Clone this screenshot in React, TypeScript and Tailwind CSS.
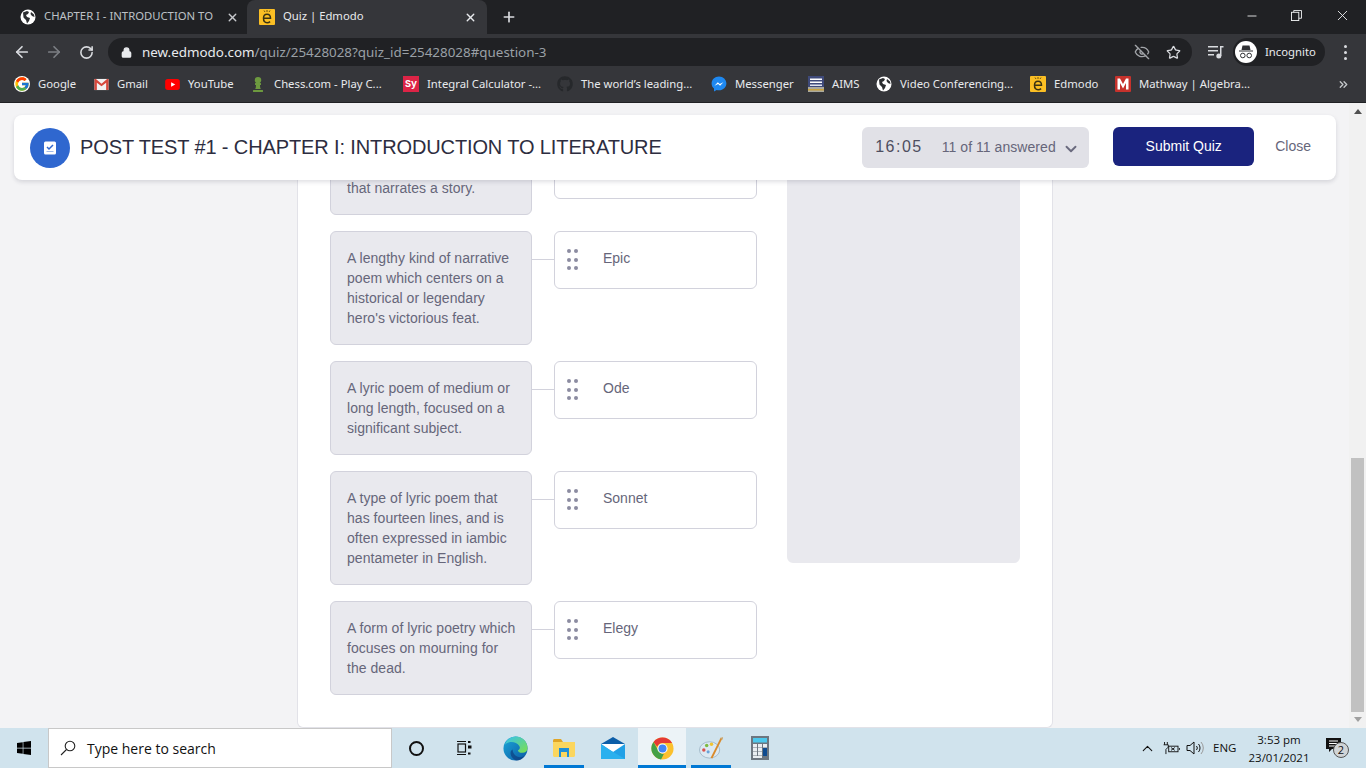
import React from 'react';
import { ArrowLeft, ArrowRight, RotateCw, Lock, X, Plus, Minus, Star, ChevronDown, ChevronUp, ChevronsRight, EyeOff } from 'lucide-react';
import { FaChessPawn, FaGithub, FaWindows } from 'react-icons/fa';
import { FcGoogle } from 'react-icons/fc';

const Globe = ({ className = 'w-4 h-4' }: { className?: string }) => (
    <svg viewBox="0 0 16 16" className={className}>
        <circle cx="8" cy="8" r="7.5" fill="#fff" />
        <path d="M3 3.5 L7 2 L9 3 L8 5 L6 6 L7 8 L10 9 L9 12 L7 14.5 L6 11 L3.5 8.5 Z M11 3 L14 5.5 L14.5 8 L12 7 L10.5 5 Z" fill="#2b2d30" />
    </svg>
);

const EdmodoLogo = ({ className = 'w-4 h-4' }: { className?: string }) => (
    <svg viewBox="0 0 16 16" className={className}>
        <rect width="16" height="16" rx="1" fill="#fbbf24" />
        <path d="M5 1.5l1 1.5M8 1v2M11 1.5l-1 1.5" stroke="#4a3b10" strokeWidth="0.8" />
        <path d="M4.5 9.3h7c0-2.7-1.5-4-3.5-4s-3.5 1.5-3.5 4 1.5 4.4 3.6 4.4c1.2 0 2.2-.4 3-1.1" fill="none" stroke="#3a3213" strokeWidth="1.5" />
    </svg>
);

const GmailIcon = () => (
    <svg viewBox="0 0 16 14" className="w-[15px] h-[13px]">
        <rect x="0.5" y="1" width="15" height="12" fill="#f2f2f2" />
        <path d="M0.5 1v12h2.5V5l5 4 5-4v8h2.5V1h-1.5L8 6.2 2 1z" fill="#d6483c" />
    </svg>
);

const YouTubeIcon = () => (
    <svg viewBox="0 0 16 12" className="w-[15px] h-[11px]">
        <rect width="16" height="12" rx="3" fill="#f00" />
        <path d="M6.5 3.5L11 6l-4.5 2.5z" fill="#fff" />
    </svg>
);

const SyIcon = () => (
    <div className="w-4 h-4 bg-[#dc2446] flex items-center justify-center text-white text-[10px] font-bold font-['Liberation_Mono',monospace]">Sy</div>
);

const MessengerIcon = () => (
    <svg viewBox="0 0 16 16" className="w-4 h-4">
        <path d="M8 .5C3.8.5.6 3.6.6 7.5c0 2.1.9 3.9 2.4 5.1v2.9l2.7-1.5c.7.2 1.500.3 2.300.3 4.200 0 7.400-3.100 7.400-6.800S12.200.5 8 .5z" fill="#1e88f0" />
        <path d="M3.500 9.800L6.800 6.300l2 1.800 3.600-1.900-3.300 3.600-2-1.900z" fill="#fff" />
    </svg>
);

const AimsIcon = () => (
    <svg viewBox="0 0 16 16" className="w-4 h-4">
        <rect width="16" height="16" fill="#3f4a7a" />
        <rect y="11" width="16" height="5" fill="#a9a9a0" />
        <rect y="13" width="16" height="1.500" fill="#c9a13b" />
        <rect x="2" y="2.500" width="12" height="1.500" fill="#fff" />
        <rect x="2" y="5.500" width="12" height="1.500" fill="#fff" />
        <rect x="2" y="8.500" width="12" height="1.500" fill="#dfe3f0" />
    </svg>
);

const MathwayIcon = () => (
    <svg viewBox="0 0 16 16" className="w-4 h-4">
        <rect width="16" height="16" rx="1" fill="#c6322c" />
        <path d="M2.500 13.500V2.500H5L8 8l3-5.500h2.500v11H11V7L8 12.500 5 7v6.500z" fill="#fff" />
    </svg>
);

const bookmarks = [
    { label: 'Google', width: 'w-[79px]', icon: <FcGoogle className="w-4 h-4 bg-white rounded-full" /> },
    { label: 'Gmail', width: 'w-[71px]', icon: <GmailIcon /> },
    { label: 'YouTube', width: 'w-[86px]', icon: <YouTubeIcon /> },
    { label: 'Chess.com - Play C...', width: 'w-[153px]', icon: <FaChessPawn className="w-4 h-4 text-[#6d9a3f]" /> },
    { label: 'Integral Calculator -...', width: 'w-[154px]', icon: <SyIcon /> },
    { label: 'The world\u2019s leading...', width: 'w-[154px]', icon: <FaGithub className="w-4 h-4 text-[#26282b]" /> },
    { label: 'Messenger', width: 'w-[97px]', icon: <MessengerIcon /> },
    { label: 'AIMS', width: 'w-[68px]', icon: <AimsIcon /> },
    { label: 'Video Conferencing...', width: 'w-[154px]', icon: <Globe /> },
    { label: 'Edmodo', width: 'w-[85px]', icon: <EdmodoLogo /> },
    { label: 'Mathway | Algebra...', width: 'w-[222px]', icon: <MathwayIcon /> },
];

const ChromeBar = () => (
    <div className="shrink-0 font-['Noto_Sans',sans-serif] text-white">
        {/* tab strip */}
        <div className="h-[34px] bg-[#202124] flex items-end relative">
            <div className="w-[239px] ml-2 h-[34px] flex items-center pl-3 pr-[8px]">
                <Globe className="w-4 h-4 shrink-0" />
                <span className="ml-2 mb-px flex-1 text-[11.3px] text-[#bdc1c6] whitespace-nowrap">CHAPTER I - INTRODUCTION TO</span>
                <X size={13} strokeWidth={2.500} className="ml-1 text-[#c8cacd]" />
            </div>
            <div className="w-[240px] h-[34px] bg-[#35363a] rounded-t-lg flex items-center pl-3 pr-[10px]">
                <EdmodoLogo className="w-4 h-4 shrink-0" />
                <span className="ml-2 mb-px flex-1 text-[11.3px] text-[#e8eaed]">Quiz | Edmodo</span>
                <X size={13} strokeWidth={2.500} className="text-[#e8eaed]" />
            </div>
            <Plus size={16} strokeWidth={2.500} className="ml-[14px] mb-[9px] text-[#dadce0]" />
            <div className="ml-auto flex items-center h-[34px] text-[#f1f3f4]">
                <Minus size={14} strokeWidth={1.500} className="mr-[32px] mb-[3px]" />
                <svg viewBox="0 0 12 12" className="w-[11px] h-[11px] mr-[32px] mb-[3px]" fill="none" stroke="currentColor">
                    <rect x="0.500" y="2.500" width="8" height="9" />
                    <path d="M3 2.500V0.500h8.500v8.500H8.500" />
                </svg>
                <X size={17} strokeWidth={1.250} className="mr-[15px] mb-[3px]" />
            </div>
        </div>
        {/* toolbar */}
        <div className="h-[33px] bg-[#35363a] flex items-center pl-[13px] pt-[3px]">
            <ArrowLeft size={18} strokeWidth={2.250} className="text-[#dadce0]" />
            <ArrowRight size={18} strokeWidth={2.250} className="ml-[14px] text-[#7c7f84]" />
            <RotateCw size={15} strokeWidth={2.500} className="ml-[16px] text-[#dadce0]" />
            <div className="ml-[14px] w-[1084px] h-[28px] bg-[#202124] rounded-full flex items-center pl-[13px] pr-[10px] text-[13.400px]">
                <Lock size={11} strokeWidth={3} fill="currentColor" className="text-[#e8eaed]" />
                <span className="ml-[10px] text-[#e8eaed]">new.edmodo.com<span className="text-[#9aa0a6]">/quiz/25428028?quiz_id=25428028#question-3</span></span>
                <EyeOff size={16} strokeWidth={2} className="ml-auto text-[#a2a5a9]" />
                <Star size={15} strokeWidth={2} className="ml-[16px] mr-[1px] text-[#dadce0]" />
            </div>
            <svg viewBox="0 0 16 14" className="ml-[16px] w-4 h-[14px] text-[#dadce0]" fill="currentColor">
                <rect x="0" y="1" width="10" height="1.500" />
                <rect x="0" y="5" width="10" height="1.500" />
                <rect x="0" y="9" width="6" height="1.500" />
                <rect x="12" y="1" width="3.500" height="1.500" />
                <rect x="12" y="1" width="1.500" height="10" />
                <circle cx="10.800" cy="11" r="2.500" />
            </svg>
            <div className="ml-[9px] w-[92px] h-[28px] bg-[#202124] rounded-full flex items-center pl-[2px]">
                <svg viewBox="0 0 22 22" className="w-[22px] h-[22px]">
                    <circle cx="11" cy="11" r="11" fill="#fff" />
                    <path d="M7.500 4.500h7l1 4.500H6.500z M4 9.500h14v1H4z" fill="#303134" />
                    <circle cx="7.800" cy="14.500" r="2.300" fill="none" stroke="#303134" strokeWidth="1" />
                    <circle cx="14.200" cy="14.500" r="2.300" fill="none" stroke="#303134" strokeWidth="1" />
                </svg>
                <span className="ml-2 text-[11.3px] text-[#e8eaed]">Incognito</span>
            </div>
            <div className="ml-[19px] flex flex-col gap-[3px]">
                <span className="w-[3px] h-[3px] bg-[#dadce0] rounded-full" />
                <span className="w-[3px] h-[3px] bg-[#dadce0] rounded-full" />
                <span className="w-[3px] h-[3px] bg-[#dadce0] rounded-full" />
            </div>
        </div>
        {/* bookmarks */}
        <div className="h-[36px] bg-[#35363a] border-b border-[#202124] flex items-center pl-[14px] pb-px">
            {bookmarks.map((b) => (
                <div key={b.label} className={`${b.width} shrink-0 flex items-center`}>
                    <span className="w-4 h-4 flex items-center justify-center shrink-0">{b.icon}</span>
                    <span className="ml-2 text-[11.3px] text-[#e8eaed] whitespace-nowrap">{b.label}</span>
                </div>
            ))}
            <ChevronsRight size={13} strokeWidth={2.500} className="text-[#c4c7ca]" />
        </div>
    </div>
);

const DragDots = () => (
    <div className="grid grid-cols-2 gap-x-[3px] gap-y-[4.500px] w-[11px] mt-[1px] shrink-0">
        {[0, 1, 2, 3, 4, 5].map((i) => (
            <span key={i} className="w-1 h-1 rounded-full bg-[#8c8ca1]" />
        ))}
    </div>
);

const rows = [
    { q: 'A poem of a certain length that narrates a story.', a: 'Narrative' },
    { q: "A lengthy kind of narrative poem which centers on a historical or legendary hero's victorious feat.", a: 'Epic' },
    { q: 'A lyric poem of medium or long length, focused on a significant subject.', a: 'Ode' },
    { q: 'A type of lyric poem that has fourteen lines, and is often expressed in iambic pentameter in English.', a: 'Sonnet' },
    { q: 'A form of lyric poetry which focuses on mourning for the dead.', a: 'Elegy' },
];

const MatchRow = ({ q, a }: { q: string; a: string }) => (
    <div className="flex items-start">
        <div className="w-[202px] shrink-0 bg-[#e9e9ee] border border-[#d2d2dc] rounded-md py-4 pl-4 pr-[13px] text-sm leading-5 tracking-[0.04px] text-[#66667a]">{q}</div>
        <div className="w-[22px] h-px mt-[28px] bg-[#d2d2dc] shrink-0" />
        <div className="w-[203px] h-[58px] shrink-0 bg-white border border-[#d2d2dc] rounded-md pl-3 pt-4 flex items-start">
            <DragDots />
            <span className="ml-[25px] text-sm leading-5 text-[#66667a]">{a}</span>
        </div>
    </div>
);

const QuizHeader = () => (
    <div className="absolute left-[14px] top-[12px] w-[1322px] h-[65px] bg-white rounded-lg shadow-[0_2px_4px_rgba(40,40,70,0.15)] flex items-center pl-4 pr-[25px]">
        <div className="w-10 h-10 rounded-full bg-[#2f67cf] flex items-center justify-center">
            <svg viewBox="0 0 14 14" className="w-[14px] h-[14px]">
                <rect x="1" y="0.500" width="12" height="13" rx="1.500" fill="#fff" />
                <path d="M4 6l2 2 4-4" fill="none" stroke="#2f67cf" strokeWidth="1.500" />
                <rect x="3.500" y="10" width="7" height="1" fill="#9db8e8" />
            </svg>
        </div>
        <h1 className="ml-[10px] mb-[2px] text-[20px] tracking-[-0.12px] text-[#2d2d40] whitespace-nowrap">POST TEST #1 - CHAPTER I: INTRODUCTION TO LITERATURE</h1>
        <div className="ml-auto w-[227px] h-[41px] mb-[1px] bg-[#e1e1e7] rounded-md flex items-center pl-[13px] text-[#66667a]">
            <span className="text-base tracking-[1.500px] text-[#4e4e60]">16:05</span>
            <span className="ml-[19px] text-sm tracking-[0.05px] whitespace-nowrap">11 of 11 answered</span>
            <ChevronDown size={18} strokeWidth={2.500} className="ml-[6px] mt-[4px] text-[#6a6a7e]" />
        </div>
        <button className="ml-6 w-[141px] h-[39px] mb-[3px] bg-[#1a237e] rounded-md text-sm text-white">Submit Quiz</button>
        <span className="ml-[21px] mb-[3px] text-sm text-[#66667a]">Close</span>
    </div>
);

const Scrollbar = () => (
    <div className="w-[17px] shrink-0 bg-[#f1f1f1] flex flex-col items-center relative">
        <svg viewBox="0 0 8 5" className="w-2 h-[5px] mt-[6px] text-[#505050]" fill="currentColor"><path d="M4 0l4 5H0z" /></svg>
        <div className="w-[13px] h-[254px] mt-[344px] bg-[#c1c1c1]" />
        <svg viewBox="0 0 8 5" className="w-2 h-[5px] mt-[5px] text-[#a0a0a0]" fill="currentColor"><path d="M4 5l4-5H0z" /></svg>
    </div>
);

const EdgeIcon = () => (
    <svg viewBox="0 0 26 26" className="w-[25px] h-[25px]">
        <defs>
            <linearGradient id="edgeA" x1="0" y1="0" x2="1" y2="1">
                <stop offset="0" stopColor="#1ba7d8" />
                <stop offset="1" stopColor="#0c59a4" />
            </linearGradient>
            <linearGradient id="edgeB" x1="0" y1="0" x2="1" y2="1">
                <stop offset="0" stopColor="#35c1f1" />
                <stop offset="1" stopColor="#7de04a" />
            </linearGradient>
        </defs>
        <circle cx="13" cy="13" r="12.500" fill="url(#edgeA)" />
        <path d="M2 9C4 3 9 .5 13 .5c7 0 12.500 5 12.500 12 0 3-2 5-5.500 5-3 0-4.500-1.500-4.500-2.500 2-1 2.500-2.500 1.500-4.500C15 7 10 5.500 6.500 6.500 4.500 7 3 8 2 9z" fill="url(#edgeB)" />
        <path d="M10 14c0 4 3 8 8 8 2 0 4-1 5-2-2 3.500-5.500 5.500-9 5.500-3.500-1-7-5-6-9 .2-1 1-2 2-2.500z" fill="#0e3f80" opacity="0.7" />
    </svg>
);

const ExplorerIcon = () => (
    <svg viewBox="0 0 22 18" className="w-[22px] h-[18px]">
        <path d="M0 1.500C0 .7.700 0 1.500 0H8l2 3H0z" fill="#e0a526" />
        <path d="M0 3h22v13.500c0 .8-.7 1.500-1.500 1.500h-19C.7 18 0 17.300 0 16.500z" fill="#fbd65e" />
        <rect x="6" y="9" width="10" height="9" fill="#1f8fd6" />
        <rect x="8" y="13" width="6" height="5" fill="#fbd65e" />
    </svg>
);

const MailIcon = () => (
    <svg viewBox="0 0 24 22" className="w-6 h-[22px]">
        <path d="M0 7L12 0l12 7v2H0z" fill="#0c5ea8" />
        <rect y="7" width="24" height="15" fill="#21a0e6" />
        <path d="M0 7l12 8 12-8z" fill="#fff" />
        <path d="M0 7v15h24L8 12.500z" fill="#2ab0ee" />
    </svg>
);

const ChromeIcon = () => (
    <svg viewBox="0 0 24 24" className="w-[23px] h-[23px]">
        <circle cx="12" cy="12" r="11.500" fill="#fbc02d" />
        <path d="M12 .5a11.500 11.500 0 0 1 10 5.750H12a5.750 5.750 0 0 0-5.500 4L2.600 5.200A11.500 11.500 0 0 1 12 .5z" fill="#e53935" />
        <path d="M2.600 5.200l5 8.800A5.750 5.750 0 0 0 13.500 17.600L10.500 23.400A11.500 11.500 0 0 1 2.600 5.200z" fill="#43a047" />
        <circle cx="12" cy="12" r="5.300" fill="#fff" />
        <circle cx="12" cy="12" r="4.200" fill="#4285f4" />
    </svg>
);

const PaintIcon = () => (
    <svg viewBox="0 0 26 24" className="w-[25px] h-[24px]">
        <ellipse cx="11" cy="14" rx="10.500" ry="8.500" fill="#dce9f2" stroke="#8fa8bb" strokeWidth="0.700" />
        <circle cx="5" cy="14" r="1.800" fill="#d9534f" />
        <circle cx="8" cy="9.500" r="1.800" fill="#7dbb42" />
        <circle cx="13" cy="8" r="1.800" fill="#f0c330" />
        <circle cx="9.500" cy="16" r="1.600" fill="#6aa3d8" />
        <path d="M23.500 1.500L13 22.500" stroke="#d98a2b" strokeWidth="2" />
        <path d="M21.500 2l3 1.500 .5-3z" fill="#c9a36a" />
    </svg>
);

const CalculatorIcon = () => (
    <svg viewBox="0 0 18 24" className="w-[18px] h-[24px]">
        <rect width="18" height="24" fill="#6c7680" />
        <rect x="2" y="2" width="14" height="4.500" fill="#4dc8ec" />
        {[8, 12, 16].map((y) =>
            [2, 7].map((x) => <rect key={`${x}-${y}`} x={x} y={y} width="4" height="3.500" fill="#e9eef2" />),
        )}
        <rect x="12" y="8" width="4" height="3.500" fill="#e9eef2" />
        <rect x="12" y="12" width="4" height="8" fill="#0d4a8f" />
        <rect x="2" y="20" width="9" height="2" fill="#e9eef2" />
    </svg>
);

const TaskButton = ({ children, active, running }: { children: React.ReactNode; active?: boolean; running?: boolean }) => (
    <div className={`w-[48px] h-10 flex items-center justify-center relative ${active ? 'bg-[#ecf3f7]' : ''}`}>
        {children}
        {running && <div className={`absolute bottom-0 h-[3px] bg-[#0078d4] ${active ? 'inset-x-0' : 'inset-x-1'}`} />}
    </div>
);

const Taskbar = () => (
    <div className="h-10 shrink-0 bg-[#d0e3ed] flex items-center font-['Open_Sans',sans-serif] text-[#111]">
        <div className="w-12 flex items-center justify-center">
            <FaWindows className="w-4 h-4 text-black" />
        </div>
        <div className="w-[344px] h-10 bg-white border border-[#c8c8c8] flex items-center pl-[11px]">
            <svg viewBox="0 0 16 16" className="w-4 h-4 text-[#222]" fill="none" stroke="currentColor" strokeWidth="1.100">
                <circle cx="10" cy="6" r="4.800" />
                <path d="M6.500 9.500L1 15" />
            </svg>
            <span className="ml-[11px] mt-px text-sm">Type here to search</span>
        </div>
        <TaskButton><span className="w-[15px] h-[15px] rounded-full border-2 border-[#111]" /></TaskButton>
        <TaskButton>
            <svg viewBox="0 0 16 16" className="w-4 h-4" fill="none" stroke="#111" strokeWidth="1.200">
                <path d="M1 1.500h9M1 14.500h9" />
                <rect x="2" y="4" width="7.500" height="8" />
                <rect x="12" y="1" width="2.500" height="2" fill="#111" stroke="none" />
                <rect x="12" y="5.500" width="3.500" height="3" fill="#111" stroke="none" />
                <rect x="12" y="12.500" width="2.500" height="2" fill="#111" stroke="none" />
            </svg>
        </TaskButton>
        <div className="flex items-center gap-px ml-[3px]">
            <TaskButton><EdgeIcon /></TaskButton>
            <TaskButton running><ExplorerIcon /></TaskButton>
            <TaskButton><MailIcon /></TaskButton>
            <TaskButton active running><ChromeIcon /></TaskButton>
            <TaskButton running><PaintIcon /></TaskButton>
            <TaskButton><CalculatorIcon /></TaskButton>
        </div>
        <div className="ml-auto flex items-center pr-[18px]">
            <ChevronUp size={17} strokeWidth={1.500} className="text-[#111]" />
            <svg viewBox="0 0 18 14" className="ml-[7px] w-[17px] h-[13px]" fill="none" stroke="#111" strokeWidth="1">
                <path d="M1.500 0v3M4.500 0v3M0.500 3h5v2.500L3 8v5" />
                <rect x="6" y="4.500" width="10" height="6" />
                <path d="M8.500 6l4 3M12.500 6l-4 3M17.500 6.500v2" />
            </svg>
            <svg viewBox="0 0 18 14" className="ml-[6px] w-[18px] h-[14px]" fill="none" stroke="#111" strokeWidth="1">
                <path d="M1 4.500h3L8 1v12L4 9.500H1z" />
                <path d="M10.500 5a3 3 0 0 1 0 4M12.500 3a6 6 0 0 1 0 8" />
                <path d="M15 1a9 9 0 0 1 0 12" stroke="#999" />
            </svg>
            <span className="ml-[9px] text-[11.5px] w-6">ENG</span>
            <div className="ml-[12px] mt-[1px] w-[60px] flex flex-col items-center text-[11.5px] leading-[18px]">
                <span>3:53 pm</span>
                <span>23/01/2021</span>
            </div>
            <div className="ml-[17px] relative w-[22px] h-[22px]">
                <svg viewBox="0 0 16 16" className="w-4 h-4 absolute top-0 left-0">
                    <path d="M0 1h15v11H6l-3 3v-3H0z" fill="#111" />
                    <path d="M3 4h9M3 6.500h9M3 9h6" stroke="#fff" strokeWidth="1" />
                </svg>
                <span className="absolute left-[7px] top-[5px] w-4 h-4 rounded-full bg-[#d0d4d6] border border-[#555] text-[11px] leading-[14px] text-center">2</span>
            </div>
        </div>
    </div>
);

export default function App() {
    return (
        <div className="w-[1366px] h-[768px] overflow-hidden flex flex-col bg-[#f3f3f5]">
            <ChromeBar />
            <div className="flex-1 min-h-0 flex relative">
                <div className="flex-1 min-w-0 flex flex-col justify-end overflow-hidden font-['Liberation_Sans',Arial,sans-serif]">
                    <div className="ml-[297px] w-[756px] shrink-0 bg-white border-x border-b border-[#e2e2e8] rounded-b-md pl-[32px] pt-2 pb-[32px] flex items-start">
                        <div className="flex flex-col gap-4 w-[427px] shrink-0">
                            {rows.map((r) => (
                                <MatchRow key={r.a} q={r.q} a={r.a} />
                            ))}
                        </div>
                        <div className="ml-[30px] w-[233px] h-[422px] bg-[#e9e9ee] rounded-md shrink-0" />
                    </div>
                </div>
                <Scrollbar />
                <div className="font-['Liberation_Sans',Arial,sans-serif]">
                    <QuizHeader />
                </div>
            </div>
            <Taskbar />
        </div>
    );
}
